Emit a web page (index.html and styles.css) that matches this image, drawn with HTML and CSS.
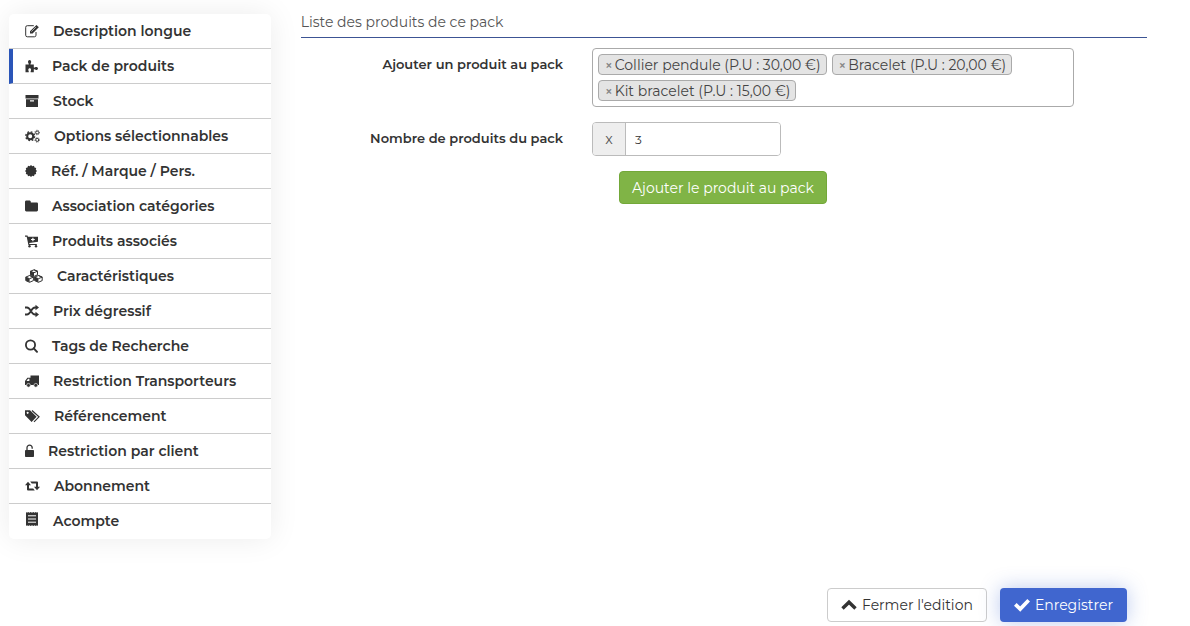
FILE: index.html
```
<!DOCTYPE html>
<html lang="fr">
<head>
  <meta charset="UTF-8">
  <meta name="viewport" content="width=device-width, initial-scale=1.0">
  <title>Pack de produits</title>
  <link rel="stylesheet" href="styles.css">
</head>
<body>
  <div class="page">
    <!-- Menu du produit -->
    <nav class="menu">
      <a href="#description"><svg width="14" height="14" viewBox="0 0 14 14"><path d="M11 8v3.200a1.600 1.600 0 0 1-1.600 1.600H2.300A1.600 1.600 0 0 1 .7 11.200V3.300a1.600 1.600 0 0 1 1.600-1.600h6.500" fill="none" stroke="currentColor"/><path d="M11.500 1l2.300 2.300-6.200 6.200H5V7.200z"/><path d="M6.400 7.600l4.500-4.500" stroke="#fff" stroke-width=".6"/></svg>Description longue</a>
      <a href="#pack" class="active"><svg width="13" height="14" viewBox="0 0 13 14"><path d="M.5 5.500h3.200c.5-.8-.7-1.300-.7-2.500C3 2 3.700 1.100 4.600 1.100S6.200 2 6.200 3c0 1.200-1.100 1.700-.6 2.500h3.200v3c.9.500 1.200-.6 2.500-.6 1 0 1.700.7 1.700 1.500s-.7 1.500-1.700 1.500c-1.300 0-1.600-1-2.500-.6v2.900H5.700c-.4-1.100.4-1.400.4-2.500 0-.9-.6-1.500-1.400-1.500s-1.400.6-1.400 1.500c0 1.100.8 1.400.4 2.500H.5z"/></svg>Pack de produits</a>
      <a href="#stock"><svg width="14" height="14" viewBox="0 0 14 14"><path d="M.5 1h13v3.500H.5zM1 5.200h12v7.800H1zM5 6.200v1.200h4V6.200z" fill-rule="evenodd"/></svg>Stock</a>
      <a href="#options"><svg width="15" height="14" viewBox="0 0 15 14"><g fill="none" stroke="currentColor"><circle cx="5.200" cy="7.200" r="3" stroke-width="2"/><circle cx="5.200" cy="7.200" r="4.400" stroke-width="1.400" stroke-dasharray="1.730 1.730"/><circle cx="12.200" cy="3.500" r="1.500"/><circle cx="12.200" cy="3.500" r="2.300" stroke-width=".8" stroke-dasharray=".9 .9"/><circle cx="12.200" cy="10.900" r="1.500"/><circle cx="12.200" cy="10.900" r="2.300" stroke-width=".8" stroke-dasharray=".9 .9"/></g></svg>Options sélectionnables</a>
      <a href="#marque"><svg width="12" height="14" viewBox="0 0 12 14"><path d="M6 1l1.300 1.200L9 1.800l.5 1.700 1.700.5-.4 1.700L12 7l-1.200 1.300.4 1.700-1.700.5-.5 1.700-1.700-.4L6 13l-1.300-1.200-1.700.4-.5-1.700L.8 10l.4-1.700L0 7l1.200-1.300L.8 4l1.700-.5L3 1.800l1.700.4z"/></svg>Réf. / Marque / Pers.</a>
      <a href="#categories"><svg width="13" height="14" viewBox="0 0 13 14"><path d="M0 3C0 2.200.6 1.600 1.400 1.600h3c.8 0 1.400.6 1.400 1.400v.4h5.800c.8 0 1.400.5 1.400 1.300v6.400c0 .8-.6 1.400-1.400 1.400H1.400C.6 12.500 0 11.900 0 11.100z"/></svg>Association catégories</a>
      <a href="#associes"><svg width="13" height="14" viewBox="0 0 13 14"><path d="M0 1.500h2.500l.4 1.300H13v5L4.200 9l.2.900h7.400v1.200H3.400L1.700 2.700H0zM7.300 3.800v1.200H6v1.100h1.300v1.200h1.200V6.100h1.300V5H8.500V3.800z" fill-rule="evenodd"/><circle cx="4.500" cy="12.300" r="1.200"/><circle cx="11" cy="12.300" r="1.200"/></svg>Produits associés</a>
      <a href="#caracteristiques"><svg width="18" height="14" viewBox="0 0 18 14"><g stroke="currentColor" stroke-linejoin="round" fill="#fff"><path d="M9 .8l3.500 1.400v3.600L9 7.400 5.500 5.800V2.200l3.500 1.500 3.500-1.500L9 .8 5.500 2.200"/><path d="M4.600 6.500l3.800 1.600v3.500l-3.800 1.700L.8 11.600V8.100l3.800 1.600 3.800-1.600-3.800-1.600L.8 8.100"/><path d="M13.400 6.500l3.800 1.600v3.500l-3.800 1.700-3.800-1.700V8.100l3.800 1.600 3.800-1.600-3.800-1.600-3.800 1.600"/></g><path d="M5.500 2.200L9 3.700v3.700L5.500 5.800zM.8 8.100l3.800 1.600v3.600L.8 11.600zM9.600 8.100l3.800 1.600v3.600l-3.800-1.700z"/></svg>Caractéristiques</a>
      <a href="#degressif"><svg width="14" height="14" viewBox="0 0 14 14"><path d="M0 3.500h2c3.800 0 4 7 8 7h1.500M0 10.500h2c3.800 0 4-7 8-7h1.500" fill="none" stroke="currentColor" stroke-width="1.800"/><path d="M10.500.7L14 3.500l-3.500 2.800zM10.500 7.700l3.500 2.800-3.500 2.800z"/></svg>Prix dégressif</a>
      <a href="#tags"><svg width="13" height="14" viewBox="0 0 13 14"><circle cx="5.500" cy="6" r="4.600" fill="none" stroke="currentColor" stroke-width="1.800"/><path d="M8.800 9.300l3.200 3.500" stroke="currentColor" stroke-width="2" stroke-linecap="round"/></svg>Tags de Recherche</a>
      <a href="#transporteurs"><svg width="14" height="14" viewBox="0 0 14 14"><path d="M5.500 1.500H14v9.500H0V7l2.400-3.300h3.100zM1.500 7h2.900V4.800H3.100z" fill-rule="evenodd"/><g stroke="#fff" stroke-width=".6"><circle cx="3.500" cy="11.300" r="1.900"/><circle cx="10.800" cy="11.300" r="1.900"/></g></svg>Restriction Transporteurs</a>
      <a href="#referencement"><svg width="15" height="14" viewBox="0 0 15 14"><path d="M0 1.200h5l6.600 6.500-5 5.200L0 6.200zM2.600 2.700a1 1 0 1 0 .1 0z" fill-rule="evenodd"/><path d="M7 1.500l7 6.300-5 5" fill="none" stroke="currentColor" stroke-width="1.200"/></svg>Référencement</a>
      <a href="#client"><svg width="9" height="14" viewBox="0 0 9 14"><path d="M2 7V3.700a2.600 2.600 0 0 1 5.200 0v1" fill="none" stroke="currentColor" stroke-width="1.300"/><rect y="6" width="9" height="7" rx=".8"/></svg>Restriction par client</a>
      <a href="#abonnement"><svg width="15" height="14" viewBox="0 0 15 14"><path d="M2 5h2v4.400h4.200l1.600 2H3q-1 0-1-1z"/><path d="M0 6.200L3 2.700l3 3.500zM13 9h-2V4.600H6.800l-1.600-2H12q1 0 1 1z"/><path d="M15 7.800l-3 3.500-3-3.500z"/></svg>Abonnement</a>
      <a href="#acompte"><svg class="receipt" width="14" height="16" viewBox="0 0 14 16"><path d="M1 1l1 .8L3.200 1l1.200.8L5.700 1 7 1.800 8.300 1l1.300.8 1.200-.8 1.200.8 1-.8v14l-1-.8-1.200.8-1.200-.8-1.300.8L7 14.200l-1.300.8-1.300-.8-1.200.8L2 14.200 1 15z"/><path d="M3 4.800h8M3 8h8M3 11.200h8" stroke="#fff"/></svg>Acompte</a>
    </nav>

    <main class="content">
      <h1>Liste des produits de ce pack</h1>
      <form class="pack-form">
        <label for="produit">Ajouter un produit au pack</label>
        <div class="tags">
          <span class="tag"><button type="button" aria-label="Retirer Collier pendule">×</button>Collier pendule (P.U : 30,00 €)</span>
          <span class="tag"><button type="button" aria-label="Retirer Bracelet">×</button>Bracelet (P.U : 20,00 €)</span>
          <span class="tag"><button type="button" aria-label="Retirer Kit bracelet">×</button>Kit bracelet (P.U : 15,00 €)</span>
          <input type="text" id="produit">
        </div>

        <label for="nombre">Nombre de produits du pack</label>
        <div class="quantity">
          <span>x</span>
          <input type="text" id="nombre" value="3">
        </div>

        <div class="add">
          <button type="button" class="btn btn-add">Ajouter le produit au pack</button>
        </div>
      </form>
    </main>
  </div>

  <footer class="actions">
    <button type="button" class="btn btn-close"><svg width="16" height="14" viewBox="0 0 16 14"><path d="M1.500 10.500L8 4.200l6.500 6.300" fill="none" stroke="currentColor" stroke-width="3.400"/></svg>Fermer l'edition</button>
    <button type="button" class="btn btn-save"><svg width="16" height="14" viewBox="0 0 16 14"><path d="M1.300 6.300l4.900 4.700L14.700 2.200" fill="none" stroke="currentColor" stroke-width="3.800"/></svg>Enregistrer</button>
  </footer>
</body>
</html>
```
FILE: styles.css
```
* {
  box-sizing: border-box;
}

body {
  margin: 0;
  font-family: Montserrat, Inter, sans-serif;
  font-size: 14px;
  line-height: 20px;
  color: #333;
  background: #fff;
}

svg {
  fill: currentColor;
  flex: none;
}

input, button {
  font-family: inherit;
  color: inherit;
}

.page {
  display: flex;
  align-items: flex-start;
  gap: 30px;
  padding: 14px 43px 0 9px;
}

/* Menu */
.menu {
  flex: 0 0 23%;
  border-radius: 5px;
  background: #fff;
  box-shadow: 0 0 30px rgba(0, 0, 0, 0.08);
}

.menu a {
  display: flex;
  align-items: center;
  gap: 14px;
  height: 35px;
  padding-left: 16px;
  border-bottom: 1px solid #ccc;
  font-weight: 600;
  color: #333;
  text-decoration: none;
}

.menu a:last-child {
  border-bottom-color: transparent;
}

.menu a.active {
  padding-left: 12px;
  border-left: 4px solid #2a55b8;
}

.receipt {
  margin-bottom: 4px;
}

/* Contenu */
.content {
  flex: 1;
}

h1 {
  margin: 0 0 10px;
  padding-bottom: 7px;
  border-bottom: 1px solid #3c5494;
  font-size: 14px;
  line-height: 16px;
  font-weight: 400;
  color: #555;
}

.pack-form {
  display: grid;
  grid-template-columns: 31% 57%;
  gap: 15px 29px;
}

.pack-form label {
  padding-top: 6px;
  font-size: 13px;
  font-weight: 600;
  text-align: right;
}

.tags {
  display: flex;
  flex-wrap: wrap;
  gap: 5px;
  padding: 5px;
  border: 1px solid #aaa;
  border-radius: 4px;
}

.tag {
  display: flex;
  align-items: center;
  height: 21px;
  padding: 0 5px;
  border: 1px solid #aaa;
  border-radius: 4px;
  background: #e4e4e4;
  line-height: 18px;
  color: #444;
}

.tag button {
  margin: 0 2px 0 1px;
  padding: 0;
  border: none;
  background: none;
  font-size: 13px;
  line-height: 18px;
  font-weight: 600;
  color: #888;
  cursor: pointer;
}

.tags input {
  flex: 1;
  min-width: 10px;
  height: 21px;
  padding: 0;
  border: none;
  outline: none;
  background: none;
}

.quantity {
  display: flex;
  width: 189px;
  height: 34px;
  border: 1px solid #bbb;
  border-radius: 4px;
  overflow: hidden;
}

.quantity span {
  width: 33px;
  border-right: 1px solid #bbb;
  background: #eee;
  line-height: 32px;
  text-align: center;
  color: #555;
}

.quantity input {
  flex: 1;
  min-width: 0;
  padding: 0 9px;
  border: none;
  font-size: 12px;
}

.add {
  grid-column: 2;
  padding-left: 27px;
}

/* Boutons */
.btn {
  display: inline-flex;
  align-items: center;
  gap: 5px;
  height: 34px;
  padding: 0 13px;
  border: 1px solid transparent;
  border-radius: 4px;
  font-size: 14px;
  cursor: pointer;
}

.btn-add {
  height: 33px;
  padding: 0 12px;
  border-color: #73a839;
  background: #80b446;
  color: #fff;
}

.btn-close {
  border-color: #ccc;
  background: #fff;
}

.btn-save {
  background: #4066cf;
  color: #fff;
  box-shadow: 0 0 20px rgba(64, 102, 207, 0.35);
}

.actions {
  display: flex;
  justify-content: flex-end;
  gap: 13px;
  padding: 49px 63px 4px 0;
}
```
